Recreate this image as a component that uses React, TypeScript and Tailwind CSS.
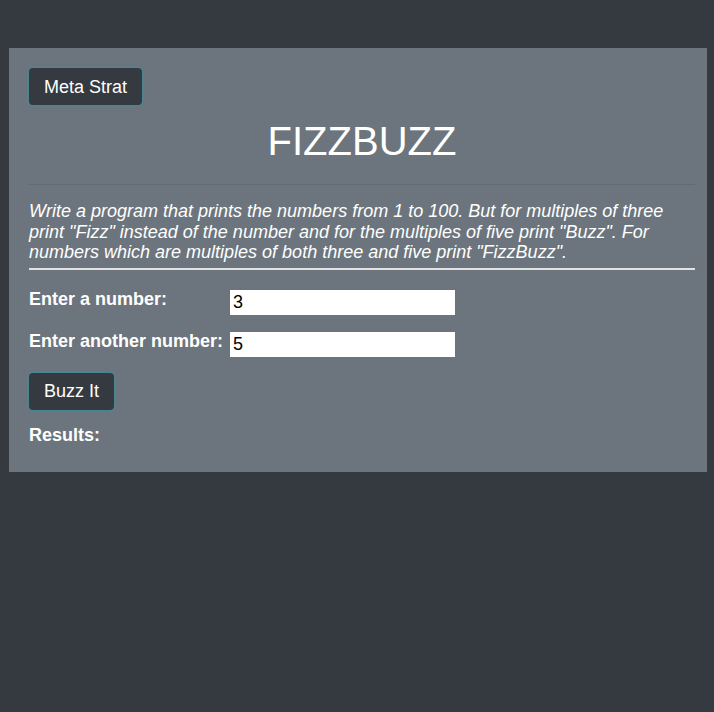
export default function App() {
  return (
    <div className="min-h-[712px] bg-[#343a40] pt-12 font-['Liberation_Sans',Arial,sans-serif] text-white">
      <div className="ml-[9px] w-[698px] bg-[#6c757d] pb-[28px] pl-5 pr-3 pt-5">
        <button className="h-[37px] rounded bg-[#343a40] px-[15px] text-lg text-white shadow-[0_0_3px_#17a2b8]">
          Meta Strat
        </button>
        <h1 className="mt-3 text-center text-[40px] leading-[48px] font-normal">FIZZBUZZ</h1>
        <hr className="mt-[19px] border-t border-[#62696f]" />
        <p className="mt-4 border-b-2 border-[#e2e2e2] pb-[5px] text-lg leading-[20.5px] italic">
          Write a program that prints the numbers from 1 to 100. But for multiples of three print "Fizz" instead of the
          number and for the multiples of five print "Buzz". For numbers which are multiples of both three and five print
          "FizzBuzz".
        </p>
        <div className="mt-5 flex flex-col gap-[17px]">
          <div className="flex items-start">
            <label className="w-[201px] text-lg font-bold leading-[18px]">Enter a number:</label>
            <input
              defaultValue="3"
              className="h-[25px] w-[225px] border-0 bg-white px-[3px] text-lg text-black outline-none"
            />
          </div>
          <div className="flex items-start">
            <label className="w-[201px] text-lg font-bold leading-[18px]">Enter another number:</label>
            <input
              defaultValue="5"
              className="h-[25px] w-[225px] border-0 bg-white px-[3px] text-lg text-black outline-none"
            />
          </div>
        </div>
        <button className="mt-4 h-[37px] rounded bg-[#343a40] px-[15px] text-lg text-white shadow-[0_0_3px_#17a2b8]">
          Buzz It
        </button>
        <div className="mt-4 text-lg font-bold leading-[18px]">Results:</div>
      </div>
    </div>
  )
}
